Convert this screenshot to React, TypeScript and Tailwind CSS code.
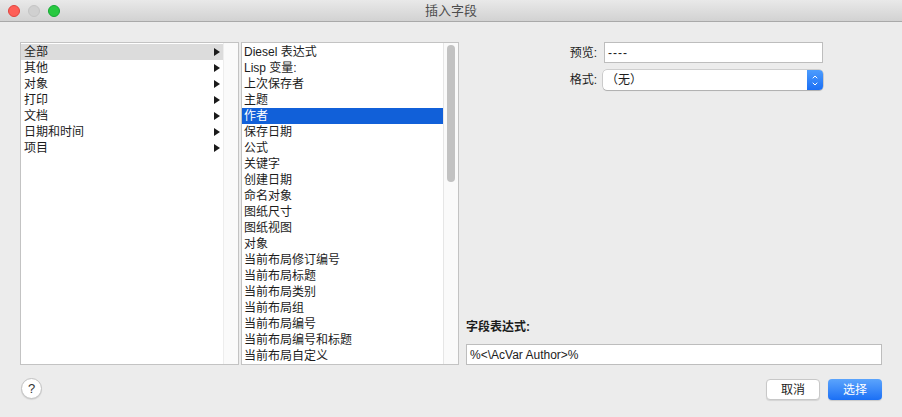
import { ChevronDown, ChevronUp } from 'lucide-react';

const categories = ['全部', '其他', '对象', '打印', '文档', '日期和时间', '项目'];

const fields = [
  'Diesel 表达式',
  'Lisp 变量:',
  '上次保存者',
  '主题',
  '作者',
  '保存日期',
  '公式',
  '关键字',
  '创建日期',
  '命名对象',
  '图纸尺寸',
  '图纸视图',
  '对象',
  '当前布局修订编号',
  '当前布局标题',
  '当前布局类别',
  '当前布局组',
  '当前布局编号',
  '当前布局编号和标题',
  '当前布局自定义',
];

const font = { fontFamily: '"Liberation Sans", "Noto Sans CJK SC", sans-serif' };

function TrafficLights() {
  return (
    <div className="flex items-center gap-[8px] pl-[8px]">
      <span className="block h-[12px] w-[12px] rounded-full border border-[#e0443e] bg-[#fe5f57]" />
      <span className="block h-[12px] w-[12px] rounded-full border border-[#c4c4c4] bg-[#d0d0d0]" />
      <span className="block h-[12px] w-[12px] rounded-full border border-[#13a833] bg-[#28c940]" />
    </div>
  );
}

function CategoryList() {
  return (
    <div className="flex h-[323px] w-[219px] border border-[#c3c3c3] bg-white">
      <ul className="flex-1 pt-px">
        {categories.map((c, i) => (
          <li
            key={c}
            className={`flex h-[16px] items-center justify-between pl-[3px] pr-[2px] text-[12px] text-[#1c1c1c] ${
              i === 0 ? 'bg-[#dcdcdc]' : ''
            }`}
          >
            <span>{c}</span>
            <svg width="6" height="8" viewBox="0 0 6 8" className="mr-[1px]">
              <path d="M0 0 L6 4 L0 8 Z" fill="#1a1a1a" />
            </svg>
          </li>
        ))}
      </ul>
      <div className="w-[15px] border-l border-[#ededed] bg-[#fafafa]" />
    </div>
  );
}

function FieldList() {
  return (
    <div className="flex h-[323px] w-[218px] overflow-hidden border border-[#c3c3c3] bg-white">
      <ul className="flex-1 overflow-hidden pt-px">
        {fields.map((f) => (
          <li
            key={f}
            className={`flex h-[16px] items-center pl-[2px] text-[12px] ${
              f === '作者' ? 'bg-[#1160d9] text-white' : 'text-[#1c1c1c]'
            }`}
          >
            {f}
          </li>
        ))}
      </ul>
      <div className="w-[15px] border-l border-[#e6e6e6] bg-[#fafafa] pl-[3px] pt-[2px]">
        <div className="h-[137px] w-[8px] rounded-full bg-[#c2c2c2]" />
      </div>
    </div>
  );
}

function FieldOptions() {
  return (
    <div className="ml-[7px] flex h-[323px] w-[416px] flex-col justify-between">
      <div className="flex flex-col gap-[7px] text-[12px] text-[#1c1c1c]">
        <div className="flex items-center">
          <span className="w-[131px] text-right">预览:</span>
          <div className="ml-[7px] flex h-[21px] w-[219px] items-center border border-[#bdbdbd] bg-white pl-[3px] tracking-[1px]">
            ----
          </div>
        </div>
        <div className="flex items-center">
          <span className="w-[131px] text-right">格式:</span>
          <div className="ml-[6px] flex h-[20px] w-[220px] items-center overflow-hidden rounded-[4px] bg-white shadow-[0_0_0_0.5px_rgba(0,0,0,0.25),0_1px_1px_rgba(0,0,0,0.15)]">
            <span className="flex-1 pl-[3px]">（无）</span>
            <div className="flex h-full w-[16px] flex-col items-center justify-center bg-gradient-to-b from-[#4c9cfd] to-[#1b6ff5] text-white">
              <ChevronUp size={8} strokeWidth={3} className="-mb-[1px]" />
              <ChevronDown size={8} strokeWidth={3} />
            </div>
          </div>
        </div>
      </div>
      <div className="flex flex-col">
        <span className="text-[12px] font-bold text-[#1c1c1c]">字段表达式:</span>
        <div className="mt-[8px] flex h-[21px] w-[416px] items-center border border-[#bdbdbd] bg-white pl-[3px] text-[12px] text-[#1c1c1c]">
          %&lt;\AcVar Author&gt;%
        </div>
      </div>
    </div>
  );
}

export default function App() {
  return (
    <div className="h-[417px] w-[902px] overflow-hidden bg-[#ececec]" style={font}>
      <div className="relative flex h-[22px] items-center border-b border-[#a9a9a9] bg-gradient-to-b from-[#e9e9e9] to-[#d2d2d2]">
        <TrafficLights />
        <span className="absolute left-0 right-0 text-center text-[13px] text-[#4d4d4d]">插入字段</span>
      </div>
      <div className="px-[20px] pt-[20px]">
        <div className="flex">
          <CategoryList />
          <div className="ml-[2px]">
            <FieldList />
          </div>
          <FieldOptions />
        </div>
        <div className="mt-[13px] flex items-start justify-between">
          <button className="ml-px flex h-[21px] w-[21px] items-center justify-center rounded-full border border-[#c2c2c2] bg-white text-[13px] text-[#333] shadow-[0_1px_1px_rgba(0,0,0,0.1)]">
            ?
          </button>
          <div className="mt-px flex gap-[8px]">
            <button className="flex h-[21px] w-[54px] items-center justify-center rounded-[4px] border border-[#c8c8c8] bg-white text-[12px] text-[#1c1c1c] shadow-[0_1px_1px_rgba(0,0,0,0.1)]">
              取消
            </button>
            <button className="flex h-[21px] w-[54px] items-center justify-center rounded-[4px] bg-gradient-to-b from-[#5ba4fc] to-[#1a6ff5] text-[12px] text-white shadow-[0_1px_1px_rgba(0,0,0,0.15)]">
              选择
            </button>
          </div>
        </div>
      </div>
    </div>
  );
}
